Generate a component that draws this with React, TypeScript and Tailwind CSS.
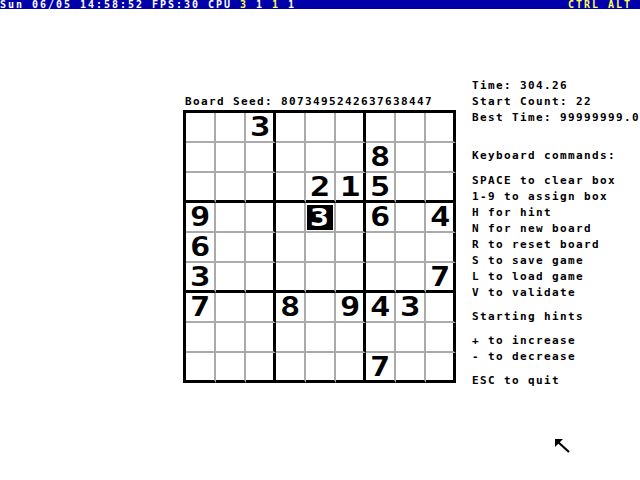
const board: string[] = [
  "  3      ",
  "      8  ",
  "    215  ",
  "9   * 6 4",
  "6        ",
  "3       7",
  "7  8 943 ",
  "         ",
  "      7  ",
];

function Cell({ ch, r, c }: { ch: string; r: number; c: number }) {
  const right =
    c % 3 === 2 ? "border-r-[3px] border-r-black" : "border-r-2 border-r-[#aaaaaa]";
  const bottom =
    r % 3 === 2 ? "border-b-[3px] border-b-black" : "border-b-2 border-b-[#aaaaaa]";
  return (
    <div className={`w-[30px] h-[30px] ${right} ${bottom} flex`}>
      {ch === "*" ? (
        <div className="mt-[2px] ml-[1px] w-[26px] h-[25px] bg-black text-white text-[25px] leading-[25px] pl-[3px] tracking-normal">
          <span className="inline-block scale-x-[1.25] origin-left">3</span>
        </div>
      ) : ch !== " " ? (
        <span className="ml-[4px] inline-block scale-x-[1.25] origin-left text-[27px] leading-[27px] tracking-normal text-black">
          {ch}
        </span>
      ) : null}
    </div>
  );
}

export default function App() {
  return (
    <div className="relative w-[640px] h-[480px] overflow-hidden bg-white text-black font-['DejaVu_Sans_Mono',monospace] font-bold text-[11px] tracking-[1.38px]">
      {/* STATUS BAR */}
      <div className="h-[9px] bg-[#0000aa] text-white text-[10px] tracking-[1.98px] leading-[9px] flex justify-between whitespace-pre">
        <span>
          Sun 06/05 14:58:52 FPS:30 CPU <span className="text-[#ffff55]">3</span> 1{" "}
          <span className="text-[#ffff55]">1</span> 1
        </span>
        <span className="text-[#ffff55] pr-2">CTRL ALT</span>
      </div>

      <div className="flex">
        {/* BOARD */}
        <div className="ml-[183px] mt-[85px]">
          <div className="pl-[2px] leading-4 whitespace-pre">Board Seed: 8073495242637638447</div>
          <div className="grid grid-cols-9 w-[273px] border-l-[3px] border-t-[3px] border-black">
            {board.map((row, r) =>
              row.split("").map((ch, c) => <Cell key={`${r}-${c}`} ch={ch} r={r} c={c} />),
            )}
          </div>
        </div>

        {/* SIDE PANEL */}
        <div className="ml-4 mt-[69px] leading-4 whitespace-pre">
          <div>Time: 304.26</div>
          <div>Start Count: 22</div>
          <div>Best Time: 99999999.0</div>
          <div className="mt-[22px]">Keyboard commands:</div>
          <div className="mt-[9px]">SPACE to clear box</div>
          <div>1-9 to assign box</div>
          <div>H for hint</div>
          <div>N for new board</div>
          <div>R to reset board</div>
          <div>S to save game</div>
          <div>L to load game</div>
          <div>V to validate</div>
          <div className="mt-2">Starting hints</div>
          <div className="mt-2">+ to increase</div>
          <div>- to decrease</div>
          <div className="mt-2">ESC to quit</div>
        </div>
      </div>

      {/* MOUSE CURSOR */}
      <svg className="absolute left-[555px] top-[439px]" width="16" height="14" viewBox="0 0 16 14">
        <path d="M0 0 H8 L0 8 Z" fill="black" />
        <path d="M3 3 L14 13" stroke="black" strokeWidth="2.2" />
      </svg>
    </div>
  );
}
